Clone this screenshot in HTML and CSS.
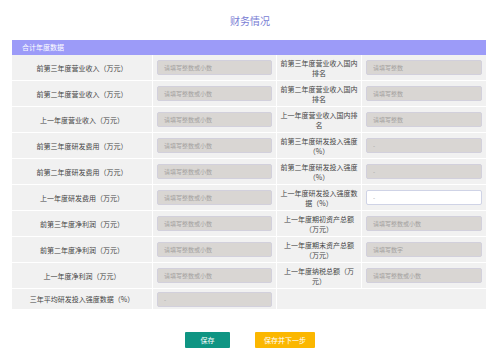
FILE: index.html
```html
<!DOCTYPE html>
<html lang="zh-CN">
<head>
    <meta charset="UTF-8">
    <meta name="viewport" content="width=device-width, initial-scale=1.0">
    <title>财务情况</title>
    <link rel="stylesheet" href="styles.css">
</head>
<body>
    <h1>财务情况</h1>

    <div class="panel">
        <div class="panel-title">合计年度数据</div>
        <div class="form-grid">
            <div class="label">前第三年度营业收入（万元）</div>
            <div class="field"><input type="text" placeholder="请填写整数或小数"></div>
            <div class="label label-narrow">前第三年度营业收入国内排名</div>
            <div class="field"><input type="text" placeholder="请填写整数"></div>

            <div class="label">前第二年度营业收入（万元）</div>
            <div class="field"><input type="text" placeholder="请填写整数或小数"></div>
            <div class="label label-narrow">前第二年度营业收入国内排名</div>
            <div class="field"><input type="text" placeholder="请填写整数"></div>

            <div class="label">上一年度营业收入（万元）</div>
            <div class="field"><input type="text" placeholder="请填写整数或小数"></div>
            <div class="label label-narrow">上一年度营业收入国内排名</div>
            <div class="field"><input type="text" placeholder="请填写整数"></div>

            <div class="label">前第三年度研发费用（万元）</div>
            <div class="field"><input type="text" placeholder="请填写整数或小数"></div>
            <div class="label label-narrow">前第三年度研发投入强度（%）</div>
            <div class="field"><input type="text" placeholder="-"></div>

            <div class="label">前第二年度研发费用（万元）</div>
            <div class="field"><input type="text" placeholder="请填写整数或小数"></div>
            <div class="label label-narrow">前第二年度研发投入强度（%）</div>
            <div class="field"><input type="text" placeholder="-"></div>

            <div class="label">上一年度研发费用（万元）</div>
            <div class="field"><input type="text" placeholder="请填写整数或小数"></div>
            <div class="label label-narrow">上一年度研发投入强度数据（%）</div>
            <div class="field"><input type="text" class="editable" placeholder="-"></div>

            <div class="label">前第三年度净利润（万元）</div>
            <div class="field"><input type="text" placeholder="请填写整数或小数"></div>
            <div class="label label-narrow">上一年度期初资产总额（万元）</div>
            <div class="field"><input type="text" placeholder="请填写整数或小数"></div>

            <div class="label">前第二年度净利润（万元）</div>
            <div class="field"><input type="text" placeholder="请填写整数或小数"></div>
            <div class="label label-narrow">上一年度期末资产总额（万元）</div>
            <div class="field"><input type="text" placeholder="请填写数字"></div>

            <div class="label">上一年度净利润（万元）</div>
            <div class="field"><input type="text" placeholder="请填写整数或小数"></div>
            <div class="label label-narrow">上一年度纳税总额（万元）</div>
            <div class="field"><input type="text" placeholder="请填写整数或小数"></div>

            <div class="label">三年平均研发投入强度数据（%）</div>
            <div class="field"><input type="text" placeholder="-"></div>
            <div class="empty"></div>
        </div>
    </div>

    <div class="actions">
        <button type="button" class="btn btn-save">保存</button>
        <button type="button" class="btn btn-next">保存并下一步</button>
    </div>
</body>
</html>
```

FILE: styles.css
```css
body {
    margin: 0;
    font-family: "Noto Sans CJK SC", "Noto Sans", sans-serif;
    background-color: #fff;
}
h1 {
    margin: 0;
    padding-top: 15px;
    height: 25px;
    font-size: 10px;
    line-height: 12px;
    font-weight: normal;
    text-align: center;
    color: #7a7dd4;
}
.panel {
    margin: 0 14px 0 12px;
    width: 474px;
}
.panel-title {
    height: 15px;
    line-height: 15px;
    padding-left: 10px;
    font-size: 7px;
    color: #fff;
    background-color: #9c9bf8;
}
.form-grid {
    display: grid;
    grid-template-columns: 140px 123px 84px 124px;
    gap: 1px;
    background-color: #fff;
}
.label {
    display: flex;
    align-items: center;
    justify-content: center;
    text-align: center;
    padding: 2.5px 3px;
    font-size: 7px;
    line-height: 10px;
    color: #444;
    background-color: #f1f1f1;
}
.label-narrow {
    padding: 2.5px 2px;
}
.field {
    display: flex;
    align-items: center;
    padding: 2.5px 4px;
    background-color: #f1f1f1;
}
.field input {
    box-sizing: border-box;
    width: 100%;
    height: 15px;
    padding: 0 6px;
    font-family: inherit;
    font-size: 6px;
    color: #666;
    background-color: #d9d6d3;
    border: 1px solid #d2d0dc;
    border-radius: 2px;
    outline: none;
}
.field input::placeholder {
    color: #a3a19f;
}
.field input.editable {
    background-color: #fff;
    border-color: #cfd3e6;
}
.empty {
    grid-column: span 2;
    background-color: #f1f1f1;
}
.actions {
    display: flex;
    justify-content: center;
    gap: 25px;
    margin-top: 23px;
}
.btn {
    height: 16px;
    padding: 0;
    border: none;
    border-radius: 1px;
    font-family: inherit;
    font-size: 7px;
    color: #fff;
    cursor: pointer;
}
.btn-save {
    width: 45px;
    background-color: #0f9583;
}
.btn-next {
    width: 60px;
    background-color: #fbb700;
}
```
